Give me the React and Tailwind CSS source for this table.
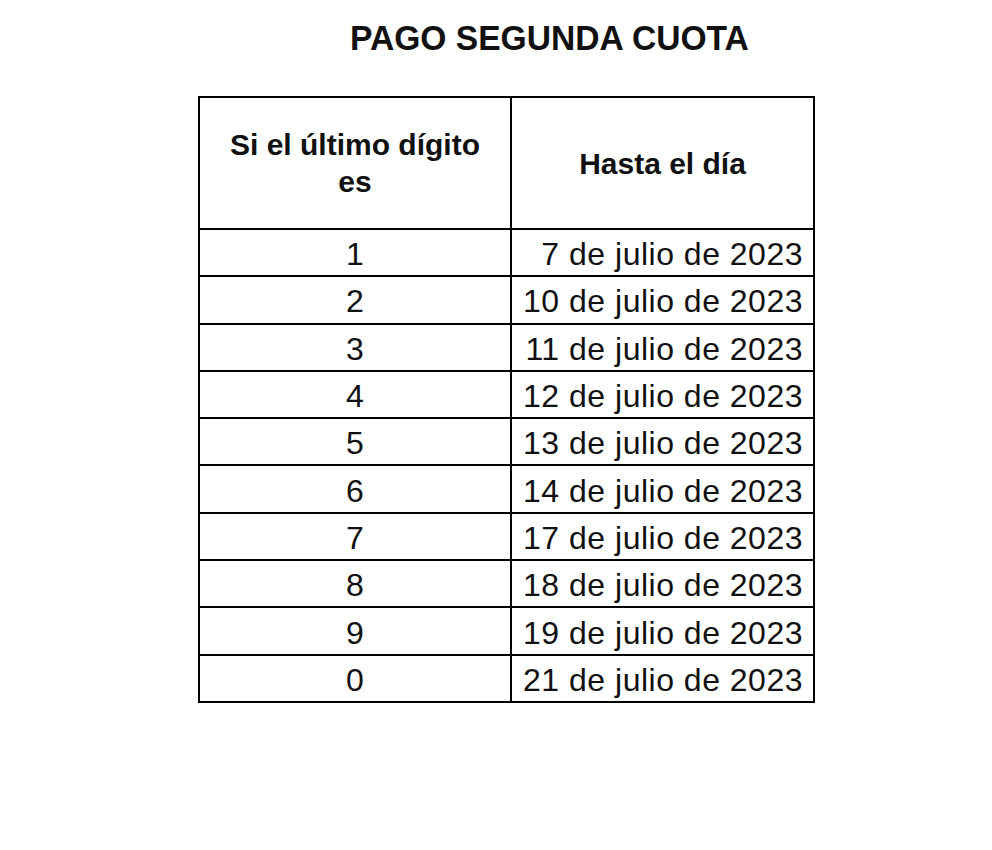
import React from 'react';

const rows = [
  ['1', '7 de julio de 2023'],
  ['2', '10 de julio de 2023'],
  ['3', '11 de julio de 2023'],
  ['4', '12 de julio de 2023'],
  ['5', '13 de julio de 2023'],
  ['6', '14 de julio de 2023'],
  ['7', '17 de julio de 2023'],
  ['8', '18 de julio de 2023'],
  ['9', '19 de julio de 2023'],
  ['0', '21 de julio de 2023'],
];

const App = () => {
  return (
    <div className="min-h-[850px] w-full bg-white text-[#111] font-['Liberation_Sans',Arial,sans-serif]">
      {/* Title */}
      <h1 className="pt-[20px] pl-[350px] text-[35px] leading-none font-bold">
        <span className="inline-block origin-left scale-x-[0.96]">PAGO SEGUNDA CUOTA</span>
      </h1>

      {/* Table */}
      <div className="mt-[41px] ml-[198px] w-[617px] border-2 border-black">
        <div className="grid grid-cols-[312px_1fr]">
          <div className="h-[130px] border-r-2 border-black flex items-center justify-center text-center text-[30px] leading-[37px] font-bold">
            <span>
              Si el último dígito
              <br />
              es
            </span>
          </div>
          <div className="h-[130px] flex items-center justify-center text-[30px] font-bold">
            Hasta el día
          </div>

          {rows.map(([digit, date]) => (
            <React.Fragment key={digit}>
              <div className="h-[47.3px] border-t-2 border-r-2 border-black flex items-center justify-center pt-[3px] text-[32px]">
                {digit}
              </div>
              <div className="h-[47.3px] border-t-2 border-black flex items-center justify-end pt-[3px] pr-[10px] text-[32px] tracking-[0.5px]">
                {date}
              </div>
            </React.Fragment>
          ))}
        </div>
      </div>
    </div>
  );
};

export default App;
